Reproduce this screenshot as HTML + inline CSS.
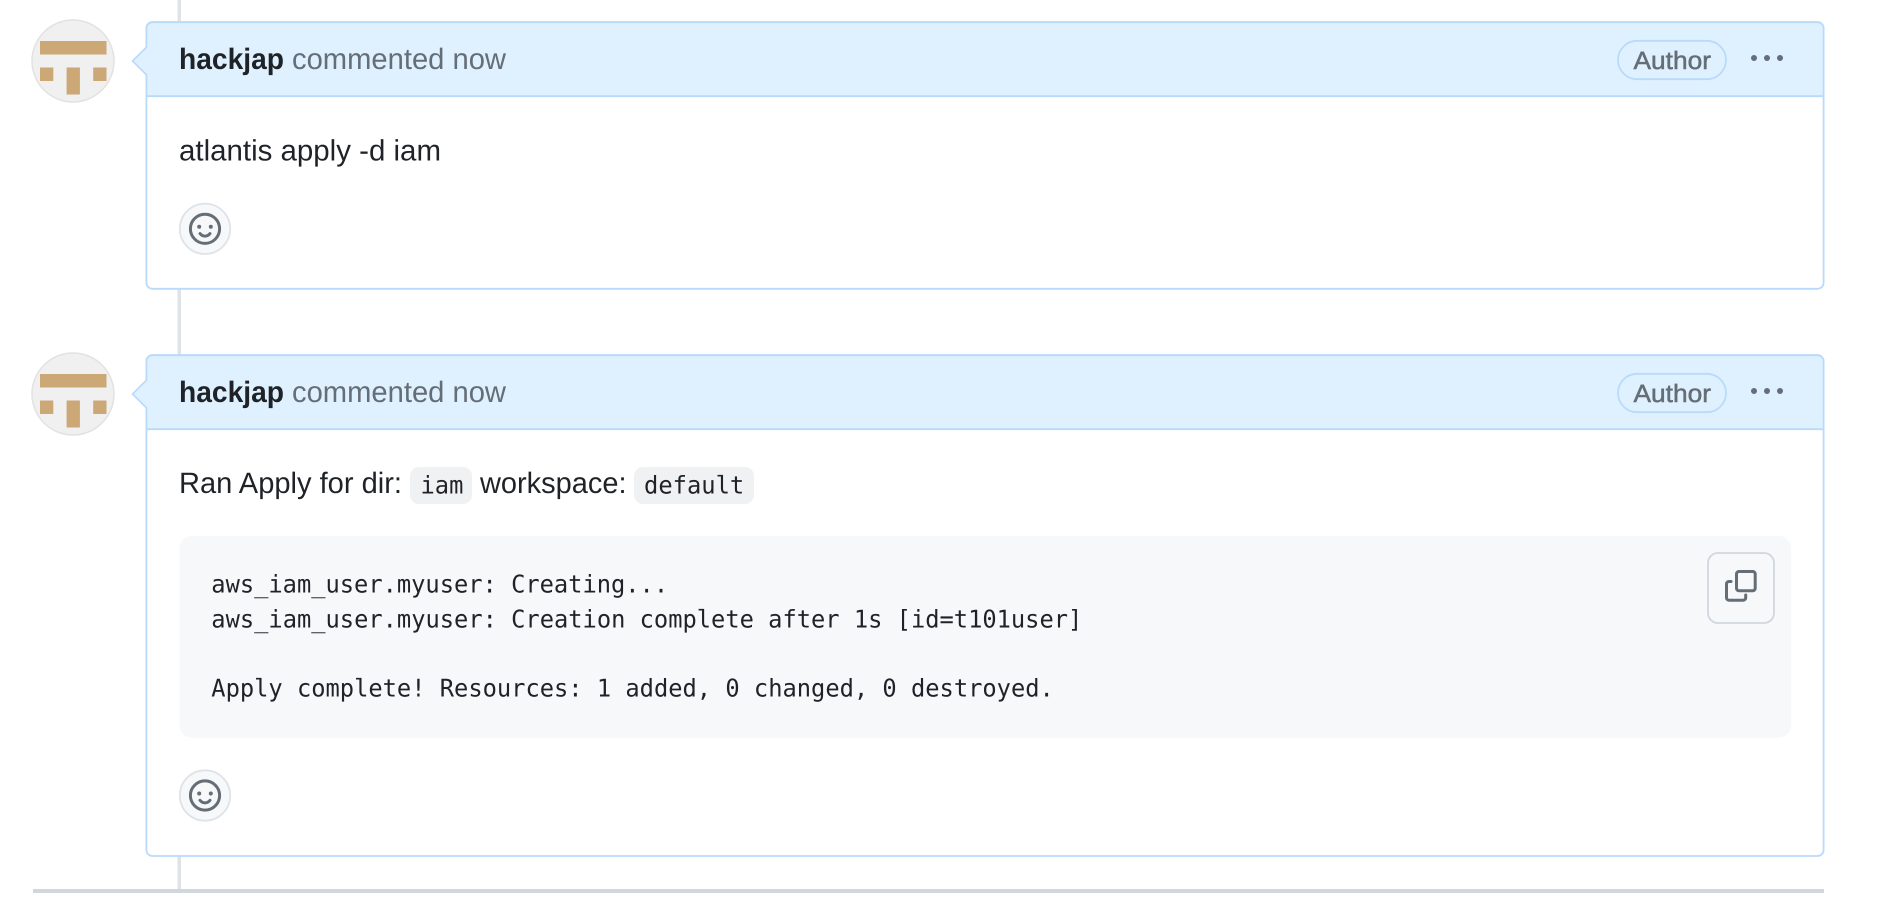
<!DOCTYPE html>
<html lang="en"><head><meta charset="utf-8"><title>Comments</title>
<style>
html,body{margin:0;padding:0;background:#fff;width:1904px;height:918px;overflow:hidden}
svg{display:block;text-rendering:geometricPrecision}
.s{font-family:"Liberation Sans",sans-serif;font-size:29.5px;fill:#1f2328}
.g{fill:#656d76}
.b{font-weight:700}
.m{font-family:"DejaVu Sans Mono",monospace;font-size:24.4px;fill:#1f2328}
.i{fill:none;stroke:#656d76;stroke-width:3}
</style></head><body>
<svg width="1904" height="918" viewBox="0 0 1904 918" xmlns="http://www.w3.org/2000/svg">
<rect x="177.5" y="0" width="3.5" height="890" fill="#dfe3e8"/>
<rect x="33" y="889" width="1791" height="4" fill="#d0d7de"/>

<!-- Comment 1 -->
<circle cx="73" cy="61" r="41" fill="#f0f0f0" stroke="#e2e2e2" stroke-width="1.5"/>
<g fill="#cba875"><rect x="40" y="41" width="66.5" height="13.5"/><rect x="40" y="67.5" width="13.3" height="13.5"/><rect x="66.6" y="67.5" width="13.3" height="27"/><rect x="93.2" y="67.5" width="13.3" height="13.5"/></g>
<rect x="146.4" y="22.2" width="1677.2" height="266.6" rx="6" fill="#fff" stroke="#b9dafb" stroke-width="1.8"/>
<path d="M146.4 96.2V28.2a6 6 0 0 1 6-6H1817.6a6 6 0 0 1 6 6V96.2Z" fill="#dff1ff" stroke="#b9dafb" stroke-width="1.8"/>
<path d="M148 46.7L132.5 61L148 75.3Z" fill="#dff1ff"/><path d="M146.6 47L132.5 61L146.6 75" fill="none" stroke="#b9dafb" stroke-width="1.6"/>
<text class="s b" x="179" y="69" textLength="105" lengthAdjust="spacingAndGlyphs">hackjap</text>
<text class="s g" x="292" y="69" textLength="214" lengthAdjust="spacingAndGlyphs">commented now</text>
<rect x="1618" y="40.8" width="108" height="38.4" rx="19.2" fill="none" stroke="#b9dafb" stroke-width="1.8"/>
<text class="s g" style="font-size:25px;stroke:#656d76;stroke-width:.5px" x="1633.5" y="69" textLength="77.5" lengthAdjust="spacingAndGlyphs">Author</text>
<g fill="#656d76"><circle cx="1754" cy="58" r="3"/><circle cx="1767" cy="58" r="3"/><circle cx="1780" cy="58" r="3"/></g>
<text class="s" x="179" y="160.5" textLength="262" lengthAdjust="spacingAndGlyphs">atlantis apply -d iam</text>
<circle cx="205" cy="228.8" r="25.2" fill="#f6f8fa" stroke="#dfe3e8" stroke-width="1.8"/>
<g class="i"><circle cx="205" cy="228.8" r="14.6"/><path d="M200 233.6c2.8 3.4 7.2 3.4 10 0" stroke-linecap="round"/></g>
<circle cx="199.2" cy="226.8" r="2" fill="#656d76"/><circle cx="210.8" cy="226.8" r="2" fill="#656d76"/>

<!-- Comment 2 -->
<circle cx="73" cy="394" r="41" fill="#f0f0f0" stroke="#e2e2e2" stroke-width="1.5"/>
<g fill="#cba875"><rect x="40" y="374" width="66.5" height="13.5"/><rect x="40" y="400.5" width="13.3" height="13.5"/><rect x="66.6" y="400.5" width="13.3" height="27"/><rect x="93.2" y="400.5" width="13.3" height="13.5"/></g>
<rect x="146.4" y="355.2" width="1677.2" height="500.8" rx="6" fill="#fff" stroke="#b9dafb" stroke-width="1.8"/>
<path d="M146.4 429.2V361.2a6 6 0 0 1 6-6H1817.6a6 6 0 0 1 6 6V429.2Z" fill="#dff1ff" stroke="#b9dafb" stroke-width="1.8"/>
<path d="M148 379.7L132.5 394L148 408.3Z" fill="#dff1ff"/><path d="M146.6 380L132.5 394L146.6 408" fill="none" stroke="#b9dafb" stroke-width="1.6"/>
<text class="s b" x="179" y="402" textLength="105" lengthAdjust="spacingAndGlyphs">hackjap</text>
<text class="s g" x="292" y="402" textLength="214" lengthAdjust="spacingAndGlyphs">commented now</text>
<rect x="1618" y="373.8" width="108" height="38.4" rx="19.2" fill="none" stroke="#b9dafb" stroke-width="1.8"/>
<text class="s g" style="font-size:25px;stroke:#656d76;stroke-width:.5px" x="1633.5" y="402" textLength="77.5" lengthAdjust="spacingAndGlyphs">Author</text>
<g fill="#656d76"><circle cx="1754" cy="391" r="3"/><circle cx="1767" cy="391" r="3"/><circle cx="1780" cy="391" r="3"/></g>

<text class="s" x="179" y="493" textLength="223" lengthAdjust="spacingAndGlyphs">Ran Apply for dir:</text>
<rect x="410" y="467" width="62" height="37" rx="9" fill="#eff1f3"/>
<text class="m" x="420.5" y="493.5" textLength="42.9" lengthAdjust="spacingAndGlyphs">iam</text>
<text class="s" x="480" y="493" textLength="146.5" lengthAdjust="spacingAndGlyphs">workspace:</text>
<rect x="634" y="467" width="120" height="37" rx="9" fill="#eff1f3"/>
<text class="m" x="644" y="493.5" textLength="100.2" lengthAdjust="spacingAndGlyphs">default</text>

<rect x="179.5" y="536" width="1611.5" height="201.7" rx="12" fill="#f6f8fa"/>
<text class="m" x="211.3" y="592.5" textLength="456.8" lengthAdjust="spacingAndGlyphs">aws_iam_user.myuser: Creating...</text>
<text class="m" x="211.3" y="627.5" textLength="871" lengthAdjust="spacingAndGlyphs">aws_iam_user.myuser: Creation complete after 1s [id=t101user]</text>
<text class="m" x="211.3" y="696.5" textLength="842.5" lengthAdjust="spacingAndGlyphs">Apply complete! Resources: 1 added, 0 changed, 0 destroyed.</text>

<rect x="1708" y="553" width="66" height="70" rx="10" fill="#f6f8fa" stroke="#d0d7de" stroke-width="1.8"/>
<g class="i" stroke-linejoin="round"><rect x="1736.5" y="571.5" width="18.7" height="19.3" rx="2.5"/><path d="M1731 581.5h-2a2.5 2.5 0 0 0-2.5 2.5v13.7a2.5 2.5 0 0 0 2.5 2.5h14.2a2.5 2.5 0 0 0 2.5-2.5V595" stroke-linecap="round"/></g>

<circle cx="205" cy="795.5" r="25.2" fill="#f6f8fa" stroke="#dfe3e8" stroke-width="1.8"/>
<g class="i"><circle cx="205" cy="795.5" r="14.6"/><path d="M200 800.3c2.8 3.4 7.2 3.4 10 0" stroke-linecap="round"/></g>
<circle cx="199.2" cy="793.5" r="2" fill="#656d76"/><circle cx="210.8" cy="793.5" r="2" fill="#656d76"/>
</svg>
</body></html>
